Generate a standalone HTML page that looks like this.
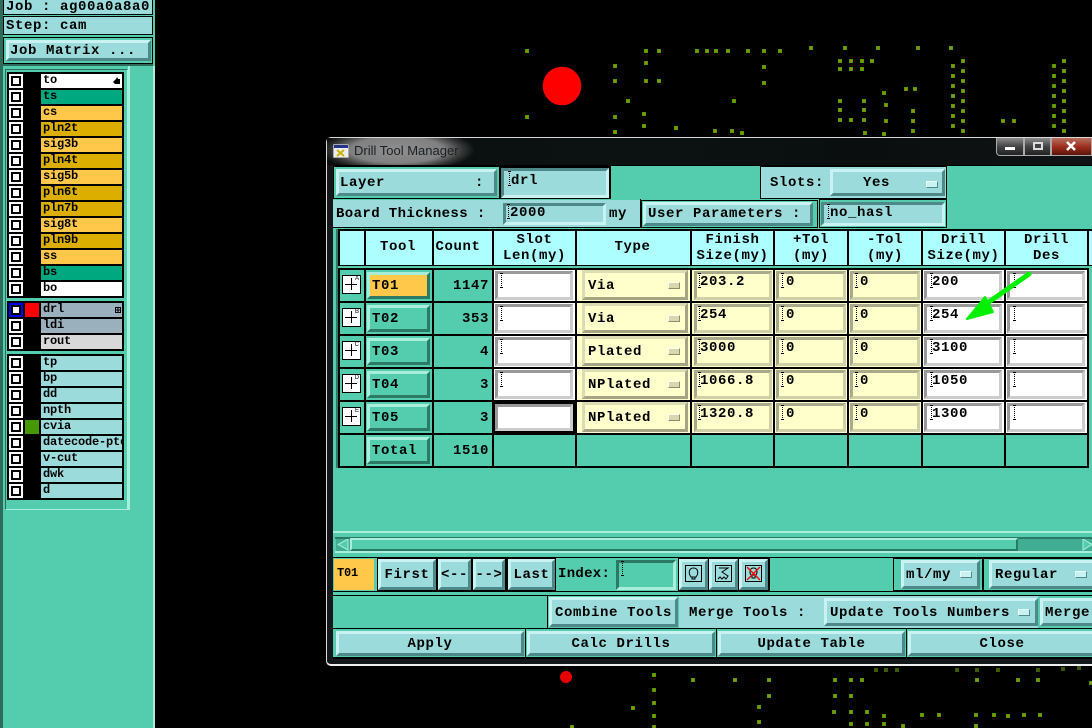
<!DOCTYPE html>
<html><head><meta charset="utf-8"><style>
html,body{margin:0;padding:0;background:#000;width:1092px;height:728px;overflow:hidden}
div{position:absolute;box-sizing:border-box;white-space:pre;overflow:hidden}
body{font:bold 14px/16px "Liberation Mono",monospace;letter-spacing:.6px;color:#000}
.cy{background:#9bdbdb}
.gr{background:#54cdae}
.k{background:#000}
.b{background:#9bdbdb;border:3px solid;border-color:#c9f3f3 #4f8888 #4f8888 #c9f3f3;display:flex;align-items:center;justify-content:center}
.g{background:#54cdae;border:3px solid;border-color:#a9eeda #2c7a66 #2c7a66 #a9eeda;display:flex;align-items:center;padding-left:2px}
.f{border:3px solid;border-color:#4f8888 #c9f3f3 #c9f3f3 #4f8888}
.w{background:#fff;border:3px solid;border-color:#999 #ccc #ccc #999;padding-top:1px}
.y{background:#ffffcc;border:3px solid;border-color:#a9a98c #cfcfa8 #cfcfa8 #a9a98c;padding-top:1px}
.t{background:#ffffcc;border:3px solid;border-color:#dcdcb4 #a5a585 #a5a585 #dcdcb4;display:flex;align-items:center;padding:2px 0 0 3px}
.h{background:#adffff;text-align:center;line-height:15.5px;padding-top:2px}
.n{text-align:right;padding-top:1px}
.c{width:3px;height:15px;background:repeating-linear-gradient(#000 0 1px,transparent 1px 2px) 1px 0/1px 100% no-repeat,linear-gradient(#000,#000) 0 0/3px 1px no-repeat,linear-gradient(#000,#000) 0 100%/3px 1px no-repeat}
.l{background:#000}
.a1{width:12px;height:7px;background:#c9f3f3;border:1px solid;border-color:#e6ffff #4f8888 #4f8888 #e6ffff}
.a2{width:12px;height:7px;background:#d8d8b0;border:1px solid;border-color:#fffff0 #8c8c70 #8c8c70 #fffff0}
.cb{left:9px;width:14px;height:14px;background:#fff}
.cb::after{content:"";position:absolute;left:2px;top:2px;width:10px;height:10px;border:2px solid #000;box-sizing:border-box;background:#fff}
.lb{left:41px;width:81px;height:14px;font-size:12px;line-height:13px;letter-spacing:-.2px;padding-left:2px}
.p{left:342px;width:19px;height:19px;background:#fff;border:1px solid #000;font:6px/6px "Liberation Sans",sans-serif;letter-spacing:0;text-align:right;padding-right:1px;overflow:visible}
.p::before{content:"";position:absolute;left:2px;top:8px;width:12px;height:1px;background:#000}
.p::after{content:"";position:absolute;left:8px;top:2px;width:1px;height:12px;background:#000}
</style></head><body>

<svg style="position:absolute;left:0;top:0" width="1092" height="728">
<circle cx="562" cy="86" r="19.3" fill="#ff0000"/>
<circle cx="566" cy="677" r="6" fill="#e60000"/>
<path fill="#a08c00" stroke="#4f9a00" stroke-width="1" d="M525.5 49.5h3v3h-3zM644.5 49.5h3v3h-3zM657.5 49.5h3v3h-3zM695.5 49.5h3v3h-3zM705.5 49.5h3v3h-3zM714.5 49.5h3v3h-3zM726.5 49.5h3v3h-3zM746.5 49.5h3v3h-3zM762.5 49.5h3v3h-3zM778.5 49.5h3v3h-3z
M809.5 46.5h3v3h-3zM843.5 46.5h3v3h-3zM876.5 46.5h3v3h-3zM916.5 46.5h3v3h-3zM949.5 46.5h3v3h-3z
M838.5 59.5h3v3h-3zM849.5 59.5h3v3h-3zM860.5 59.5h3v3h-3zM870.5 59.5h3v3h-3zM961.5 59.5h3v3h-3zM1062.5 59.5h3v3h-3zM644.5 61.5h3v3h-3z
M613.5 64.5h3v3h-3zM951.5 64.5h3v3h-3zM1052.5 64.5h3v3h-3zM762.5 65.5h3v3h-3z
M838.5 67.5h3v3h-3zM849.5 67.5h3v3h-3zM860.5 67.5h3v3h-3zM961.5 69.5h3v3h-3zM1062.5 69.5h3v3h-3zM951.5 74.5h3v3h-3zM1052.5 74.5h3v3h-3z
M613.5 79.5h3v3h-3zM644.5 79.5h3v3h-3zM657.5 79.5h3v3h-3zM961.5 79.5h3v3h-3zM1062.5 79.5h3v3h-3zM762.5 81.5h3v3h-3zM951.5 84.5h3v3h-3zM1052.5 84.5h3v3h-3z
M904.5 87.5h3v3h-3zM913.5 87.5h3v3h-3zM961.5 89.5h3v3h-3zM1062.5 89.5h3v3h-3zM882.5 91.5h3v3h-3zM951.5 94.5h3v3h-3zM1052.5 94.5h3v3h-3z
M838.5 99.5h3v3h-3zM862.5 99.5h3v3h-3zM961.5 99.5h3v3h-3zM1062.5 99.5h3v3h-3zM626.5 99.5h3v3h-3zM732.5 99.5h3v3h-3zM884.5 103.5h3v3h-3zM951.5 104.5h3v3h-3zM1052.5 104.5h3v3h-3z
M838.5 108.5h3v3h-3zM862.5 108.5h3v3h-3zM911.5 109.5h3v3h-3zM961.5 109.5h3v3h-3zM1062.5 109.5h3v3h-3zM642.5 112.5h3v3h-3zM951.5 114.5h3v3h-3zM1052.5 114.5h3v3h-3zM525.5 115.5h3v3h-3zM613.5 115.5h3v3h-3z
M838.5 118.5h3v3h-3zM849.5 118.5h3v3h-3zM862.5 118.5h3v3h-3zM884.5 119.5h3v3h-3zM911.5 119.5h3v3h-3zM961.5 119.5h3v3h-3zM1062.5 119.5h3v3h-3zM1001.5 119.5h3v3h-3zM1012.5 119.5h3v3h-3z
M642.5 124.5h3v3h-3zM951.5 124.5h3v3h-3zM1052.5 124.5h3v3h-3zM674.5 126.5h3v3h-3zM713.5 129.5h3v3h-3zM730.5 129.5h3v3h-3zM911.5 129.5h3v3h-3zM961.5 129.5h3v3h-3zM1062.5 129.5h3v3h-3zM613.5 130.5h3v3h-3zM740.5 131.5h3v3h-3zM863.5 131.5h3v3h-3zM882.5 132.5h3v3h-3z
M652.5 673.5h3v3h-3zM691.5 678.5h3v3h-3zM733.5 678.5h3v3h-3zM767.5 678.5h3v3h-3zM833.5 678.5h3v3h-3zM849.5 678.5h3v3h-3zM860.5 678.5h3v3h-3zM975.5 678.5h3v3h-3zM1016.5 678.5h3v3h-3zM1036.5 678.5h3v3h-3zM1089.5 681.5h3v3h-3z
M652.5 688.5h3v3h-3zM767.5 694.5h3v3h-3zM833.5 694.5h3v3h-3zM849.5 694.5h3v3h-3zM652.5 701.5h3v3h-3zM757.5 705.5h3v3h-3zM631.5 706.5h3v3h-3z
M832.5 710.5h3v3h-3zM849.5 710.5h3v3h-3zM865.5 710.5h3v3h-3zM920.5 713.5h3v3h-3zM937.5 713.5h3v3h-3zM974.5 713.5h3v3h-3zM992.5 713.5h3v3h-3zM1022.5 713.5h3v3h-3zM1038.5 713.5h3v3h-3zM652.5 714.5h3v3h-3zM882.5 714.5h3v3h-3zM1006.5 714.5h3v3h-3z
M757.5 720.5h3v3h-3zM849.5 722.5h3v3h-3zM865.5 722.5h3v3h-3zM882.5 722.5h3v3h-3zM901.5 724.5h3v3h-3zM974.5 724.5h3v3h-3zM570.5 725.5h3v3h-3zM652.5 725.5h3v3h-3z"/>
<path fill="#5a5000" stroke="#2f5c00" stroke-width="1" d="M874.5 668.5h3v3h-3zM884.5 668.5h3v3h-3zM895.5 668.5h3v3h-3zM955.5 668.5h3v3h-3zM975.5 668.5h3v3h-3zM996.5 668.5h3v3h-3zM1036.5 668.5h3v3h-3zM1061.5 667.5h3v3h-3zM1077.5 666.5h3v3h-3z"/>
</svg>

<!-- LEFT PANEL -->
<div class="gr" style="left:0;top:0;width:155px;height:728px"></div>
<div style="left:0;top:0;width:3px;height:728px;background:#2d6b5a"></div>
<div style="left:153px;top:66px;width:2px;height:662px;background:#a9eeda"></div>
<div style="left:128px;top:66px;width:2px;height:444px;background:#a9eeda"></div>
<div style="left:3px;top:64px;width:150px;height:2px;background:#2d6b5a"></div>
<div class="cy" style="left:3px;top:-3px;width:150px;height:18px;border:1px solid #000;padding:1px 2px;line-height:16px">Job : ag00a0a8a0</div>
<div class="cy" style="left:3px;top:16px;width:150px;height:19px;border:1px solid #000;padding:1px 2px;line-height:16px">Step: cam</div>
<div style="left:3px;top:37px;width:150px;height:27px;background:#54cdae;border:1px solid #000"></div>
<div class="b" style="left:6px;top:40px;width:145px;height:21px;justify-content:flex-start;padding-left:1px">Job Matrix ...</div>

<div style="left:5px;top:69px;width:123px;height:441px;border:1px solid #2d6b5a;border-right-color:#a9eeda;border-bottom-color:#a9eeda"></div>

<div class="k" style="left:7px;top:72px;width:117px;height:226px"></div>
<div class="k" style="left:7px;top:301px;width:117px;height:50px"></div>
<div class="k" style="left:7px;top:354px;width:117px;height:146px"></div>

<div class="cb" style="top:74px"></div><div class="lb" style="top:74px;background:#fff">to</div>
<div class="cb" style="top:90px"></div><div class="lb" style="top:90px;background:#00a880">ts</div>
<div class="cb" style="top:106px"></div><div class="lb" style="top:106px;background:#ffc84a">cs</div>
<div class="cb" style="top:122px"></div><div class="lb" style="top:122px;background:#dcae00">pln2t</div>
<div class="cb" style="top:138px"></div><div class="lb" style="top:138px;background:#ffc84a">sig3b</div>
<div class="cb" style="top:154px"></div><div class="lb" style="top:154px;background:#dcae00">pln4t</div>
<div class="cb" style="top:170px"></div><div class="lb" style="top:170px;background:#ffc84a">sig5b</div>
<div class="cb" style="top:186px"></div><div class="lb" style="top:186px;background:#dcae00">pln6t</div>
<div class="cb" style="top:202px"></div><div class="lb" style="top:202px;background:#dcae00">pln7b</div>
<div class="cb" style="top:218px"></div><div class="lb" style="top:218px;background:#ffc84a">sig8t</div>
<div class="cb" style="top:234px"></div><div class="lb" style="top:234px;background:#dcae00">pln9b</div>
<div class="cb" style="top:250px"></div><div class="lb" style="top:250px;background:#ffc84a">ss</div>
<div class="cb" style="top:266px"></div><div class="lb" style="top:266px;background:#00a880">bs</div>
<div class="cb" style="top:282px"></div><div class="lb" style="top:282px;background:#fff">bo</div>

<div class="cb" style="top:303px;background:#0000f0"></div><div style="left:25px;top:303px;width:14px;height:14px;background:#ff0000"></div><div class="lb" style="top:303px;background:#9ab0bc">drl</div>
<div class="cb" style="top:319px"></div><div class="lb" style="top:319px;background:#9ab0bc">ldi</div>
<div class="cb" style="top:335px"></div><div class="lb" style="top:335px;background:#d8d8d8">rout</div>

<div class="cb" style="top:356px"></div><div class="lb" style="top:356px;background:#9bdbdb">tp</div>
<div class="cb" style="top:372px"></div><div class="lb" style="top:372px;background:#9bdbdb">bp</div>
<div class="cb" style="top:388px"></div><div class="lb" style="top:388px;background:#9bdbdb">dd</div>
<div class="cb" style="top:404px"></div><div class="lb" style="top:404px;background:#9bdbdb">npth</div>
<div class="cb" style="top:420px"></div><div style="left:25px;top:420px;width:14px;height:14px;background:#449900"></div><div class="lb" style="top:420px;background:#9bdbdb">cvia</div>
<div class="cb" style="top:436px"></div><div class="lb" style="top:436px;background:#9bdbdb">datecode-ptc</div>
<div class="cb" style="top:452px"></div><div class="lb" style="top:452px;background:#9bdbdb">v-cut</div>
<div class="cb" style="top:468px"></div><div class="lb" style="top:468px;background:#9bdbdb">dwk</div>
<div class="cb" style="top:484px"></div><div class="lb" style="top:484px;background:#9bdbdb">d</div>

<svg style="position:absolute;left:112px;top:76px" width="9" height="10"><path d="M1 6l3-3 1-2 1 2h2v5H3z" fill="#000"/></svg>
<svg style="position:absolute;left:115px;top:307px" width="7" height="7"><path d="M.5.5h5v5h-5zM3 .5v5M.5 3h5" fill="none" stroke="#000"/></svg>

<!-- WINDOW -->
<div style="left:326px;top:137px;width:766px;height:529px;background:#15181a;border:1px solid #d8d8d8;border-right:0;border-bottom:2px solid #eee;border-radius:5px 0 0 5px"></div>
<div style="left:327px;top:138px;width:765px;height:27px;background:linear-gradient(90deg,#0a0d0d,#0c1212 40%,#0a0e0e 70%,#101416)"></div>
<div style="left:327px;top:138px;width:150px;height:27px;background:radial-gradient(ellipse 78px 22px at 70px 12px,#8f8f8f 0,#808080 60%,rgba(90,90,90,.6) 82%,rgba(0,0,0,0) 100%)"></div>
<div style="left:354px;top:143px;width:120px;height:16px;font:13px/16px 'Liberation Sans',sans-serif;letter-spacing:0;color:#1a2024">Drill Tool Manager</div>
<svg style="position:absolute;left:333px;top:144px" width="16" height="14"><rect width="16" height="14" fill="#eee" stroke="#666"/><rect x="1" y="1" width="14" height="3" fill="#223388"/><path d="M4 6l7 6M11 6l-7 6" stroke="#c8b400" stroke-width="2"/></svg>

<div style="left:996px;top:138px;width:28px;height:18px;background:linear-gradient(#8c8c8c,#444 50%,#222);border:1px solid #aaa;border-top:0;border-radius:0 0 0 4px"></div>
<div style="left:1005px;top:147px;width:10px;height:3px;background:#fff"></div>
<div style="left:1024px;top:138px;width:27px;height:18px;background:linear-gradient(#8c8c8c,#444 50%,#222);border:1px solid #aaa;border-top:0"></div>
<div style="left:1033px;top:142px;width:10px;height:8px;border:2px solid #ddd;background:#444"></div>
<div style="left:1051px;top:138px;width:41px;height:18px;background:linear-gradient(#b87060,#a03020 50%,#5a1408);border:1px solid #aaa;border-top:0"></div>
<svg style="position:absolute;left:1064px;top:140px" width="14" height="13"><path d="M3 2l8 8M11 2l-8 8" stroke="#fff" stroke-width="2.6"/></svg>

<div class="gr" style="left:333px;top:165px;width:759px;height:494px;border-top:1px solid #000"></div>

<!-- top rows -->
<div class="k" style="left:333px;top:166px;width:167px;height:33px"></div>
<div class="gr" style="left:334px;top:167px;width:165px;height:31px"></div>
<div class="b" style="left:336px;top:169px;width:161px;height:27px;justify-content:flex-start;padding-left:1px">Layer          :</div>
<div class="k" style="left:500px;top:166px;width:111px;height:33px"></div>
<div class="cy f" style="left:501px;top:168px;width:108px;height:30px;padding:3px 0 0 7px;line-height:15px">drl</div>
<div class="c" style="left:508px;top:171px"></div>
<div class="k" style="left:760px;top:166px;width:187px;height:33px"></div>
<div class="cy" style="left:761px;top:167px;width:185px;height:31px;padding:8px 0 0 9px">Slots:</div>
<div class="b" style="left:830px;top:169px;width:115px;height:27px;padding-right:22px">Yes</div>
<div class="a1" style="left:926px;top:181px"></div>

<div class="cy" style="left:333px;top:200px;width:307px;height:28px;border-bottom:1px solid #000;padding:6px 0 0 3px;letter-spacing:.4px">Board Thickness :</div>
<div class="f" style="left:503px;top:203px;width:103px;height:22px;padding:1px 0 0 4px;line-height:13px">2000</div>
<div class="c" style="left:507px;top:204px"></div>
<div style="left:609px;top:206px;width:30px;height:18px">my</div>
<div class="k" style="left:640px;top:199px;width:1px;height:29px"></div>
<div class="gr" style="left:641px;top:200px;width:177px;height:28px;border:1px solid #000"></div>
<div class="b" style="left:643px;top:202px;width:170px;height:24px;justify-content:flex-start;padding-left:2px">User Parameters :</div>
<div class="gr" style="left:819px;top:199px;width:128px;height:29px;border:1px solid #000"></div>
<div class="cy f" style="left:821px;top:202px;width:124px;height:24px;padding:2px 0 0 6px;line-height:13px">no_hasl</div>
<div class="c" style="left:827px;top:204px"></div>

<!-- table header -->
<div style="left:333px;top:229px;width:3px;height:239px;background:#54cdae"></div>
<div style="left:336px;top:229px;width:2px;height:239px;background:#2c7a66"></div>
<div class="k" style="left:338px;top:229px;width:754px;height:37px"></div>
<div class="h" style="left:340px;top:231px;width:24px;height:34px"></div>
<div class="h" style="left:366px;top:231px;width:66px;height:34px;padding:9px 2px 0 0">Tool</div>
<div class="h" style="left:434px;top:231px;width:58px;height:34px;padding:9px 10px 0 0">Count</div>
<div class="h" style="left:494px;top:231px;width:81px;height:34px">Slot
Len(my)</div>
<div class="h" style="left:577px;top:231px;width:113px;height:34px;padding:9px 2px 0 0">Type</div>
<div class="h" style="left:692px;top:231px;width:81px;height:34px">Finish
Size(my)</div>
<div class="h" style="left:775px;top:231px;width:72px;height:34px">+Tol
(my)</div>
<div class="h" style="left:849px;top:231px;width:72px;height:34px">-Tol
(my)</div>
<div class="h" style="left:923px;top:231px;width:81px;height:34px">Drill
Size(my)</div>
<div class="h" style="left:1006px;top:231px;width:81px;height:34px">Drill
Des</div>
<div class="h" style="left:1089px;top:231px;width:3px;height:34px"></div>

<!-- cell fills -->
<div style="left:494px;top:270px;width:81px;height:163px;background:#fff"></div>
<div class="k" style="left:494px;top:402px;width:81px;height:31px"></div>
<div style="left:577px;top:270px;width:113px;height:163px;background:#ffffcc"></div>
<div style="left:692px;top:270px;width:229px;height:163px;background:#ffffcc"></div>
<div style="left:923px;top:270px;width:164px;height:163px;background:#fff"></div>

<!-- grid -->
<div class="l" style="left:338px;top:268px;width:751px;height:2px"></div>
<div class="l" style="left:338px;top:301px;width:751px;height:2px"></div>
<div class="l" style="left:338px;top:334px;width:751px;height:2px"></div>
<div class="l" style="left:338px;top:367px;width:751px;height:2px"></div>
<div class="l" style="left:338px;top:400px;width:751px;height:2px"></div>
<div class="l" style="left:338px;top:433px;width:751px;height:2px"></div>
<div class="l" style="left:338px;top:466px;width:751px;height:2px"></div>
<div class="l" style="left:338px;top:268px;width:2px;height:200px"></div>
<div class="l" style="left:364px;top:268px;width:2px;height:200px"></div>
<div class="l" style="left:432px;top:268px;width:2px;height:200px"></div>
<div class="l" style="left:492px;top:268px;width:2px;height:200px"></div>
<div class="l" style="left:575px;top:268px;width:2px;height:200px"></div>
<div class="l" style="left:690px;top:268px;width:2px;height:200px"></div>
<div class="l" style="left:773px;top:268px;width:2px;height:200px"></div>
<div class="l" style="left:847px;top:268px;width:2px;height:200px"></div>
<div class="l" style="left:921px;top:268px;width:2px;height:200px"></div>
<div class="l" style="left:1004px;top:268px;width:2px;height:200px"></div>
<div class="l" style="left:1087px;top:268px;width:2px;height:200px"></div>

<!-- Row 1 -->
<div class="p" style="top:275px">A</div>
<div class="g" style="left:367px;top:272px;width:63px;height:27px;background:#ffc84a">T01</div>
<div class="n" style="left:434px;top:277px;width:55px;height:18px">1147</div>
<div class="w" style="left:495px;top:271px;width:78px;height:29px"></div><div class="c" style="left:500px;top:273px"></div>
<div class="t" style="left:582px;top:270px;width:106px;height:30px">Via</div><div class="a2" style="left:668px;top:282px"></div>
<div class="y" style="left:694px;top:271px;width:78px;height:29px;padding-left:3px;line-height:14px">203.2</div><div class="c" style="left:698px;top:273px"></div>
<div class="y" style="left:776px;top:271px;width:70px;height:29px;padding-left:7px;line-height:14px">0</div><div class="c" style="left:781px;top:273px"></div>
<div class="y" style="left:850px;top:271px;width:70px;height:29px;padding-left:7px;line-height:14px">0</div><div class="c" style="left:855px;top:273px"></div>
<div class="w" style="left:924px;top:271px;width:78px;height:29px;padding-left:5px;line-height:14px">200</div><div class="c" style="left:930px;top:273px"></div>
<div class="w" style="left:1007px;top:271px;width:78px;height:29px"></div><div class="c" style="left:1013px;top:273px"></div>

<!-- Row 2 -->
<div class="p" style="top:308px">B</div>
<div class="g" style="left:367px;top:305px;width:63px;height:27px">T02</div>
<div class="n" style="left:434px;top:310px;width:55px;height:18px">353</div>
<div class="w" style="left:495px;top:304px;width:78px;height:29px"></div><div class="c" style="left:500px;top:306px"></div>
<div class="t" style="left:582px;top:303px;width:106px;height:30px">Via</div><div class="a2" style="left:668px;top:315px"></div>
<div class="y" style="left:694px;top:304px;width:78px;height:29px;padding-left:3px;line-height:14px">254</div><div class="c" style="left:698px;top:306px"></div>
<div class="y" style="left:776px;top:304px;width:70px;height:29px;padding-left:7px;line-height:14px">0</div><div class="c" style="left:781px;top:306px"></div>
<div class="y" style="left:850px;top:304px;width:70px;height:29px;padding-left:7px;line-height:14px">0</div><div class="c" style="left:855px;top:306px"></div>
<div class="w" style="left:924px;top:304px;width:78px;height:29px;padding-left:5px;line-height:14px">254</div><div class="c" style="left:930px;top:306px"></div>
<div class="w" style="left:1007px;top:304px;width:78px;height:29px"></div><div class="c" style="left:1013px;top:306px"></div>

<!-- Row 3 -->
<div class="p" style="top:341px">C</div>
<div class="g" style="left:367px;top:338px;width:63px;height:27px">T03</div>
<div class="n" style="left:434px;top:343px;width:55px;height:18px">4</div>
<div class="w" style="left:495px;top:337px;width:78px;height:29px"></div><div class="c" style="left:500px;top:339px"></div>
<div class="t" style="left:582px;top:336px;width:106px;height:30px">Plated</div><div class="a2" style="left:668px;top:348px"></div>
<div class="y" style="left:694px;top:337px;width:78px;height:29px;padding-left:3px;line-height:14px">3000</div><div class="c" style="left:698px;top:339px"></div>
<div class="y" style="left:776px;top:337px;width:70px;height:29px;padding-left:7px;line-height:14px">0</div><div class="c" style="left:781px;top:339px"></div>
<div class="y" style="left:850px;top:337px;width:70px;height:29px;padding-left:7px;line-height:14px">0</div><div class="c" style="left:855px;top:339px"></div>
<div class="w" style="left:924px;top:337px;width:78px;height:29px;padding-left:5px;line-height:14px">3100</div><div class="c" style="left:930px;top:339px"></div>
<div class="w" style="left:1007px;top:337px;width:78px;height:29px"></div><div class="c" style="left:1013px;top:339px"></div>

<!-- Row 4 -->
<div class="p" style="top:374px">D</div>
<div class="g" style="left:367px;top:371px;width:63px;height:27px">T04</div>
<div class="n" style="left:434px;top:376px;width:55px;height:18px">3</div>
<div class="w" style="left:495px;top:370px;width:78px;height:29px"></div><div class="c" style="left:500px;top:372px"></div>
<div class="t" style="left:582px;top:369px;width:106px;height:30px">NPlated</div><div class="a2" style="left:668px;top:381px"></div>
<div class="y" style="left:694px;top:370px;width:78px;height:29px;padding-left:3px;line-height:14px">1066.8</div><div class="c" style="left:698px;top:372px"></div>
<div class="y" style="left:776px;top:370px;width:70px;height:29px;padding-left:7px;line-height:14px">0</div><div class="c" style="left:781px;top:372px"></div>
<div class="y" style="left:850px;top:370px;width:70px;height:29px;padding-left:7px;line-height:14px">0</div><div class="c" style="left:855px;top:372px"></div>
<div class="w" style="left:924px;top:370px;width:78px;height:29px;padding-left:5px;line-height:14px">1050</div><div class="c" style="left:930px;top:372px"></div>
<div class="w" style="left:1007px;top:370px;width:78px;height:29px"></div><div class="c" style="left:1013px;top:372px"></div>

<!-- Row 5 -->
<div class="p" style="top:407px">E</div>
<div class="g" style="left:367px;top:404px;width:63px;height:27px">T05</div>
<div class="n" style="left:434px;top:409px;width:55px;height:18px">3</div>
<div class="w" style="left:495px;top:404px;width:78px;height:27px"></div>
<div class="t" style="left:582px;top:402px;width:106px;height:30px">NPlated</div><div class="a2" style="left:668px;top:414px"></div>
<div class="y" style="left:694px;top:403px;width:78px;height:29px;padding-left:3px;line-height:14px">1320.8</div><div class="c" style="left:698px;top:405px"></div>
<div class="y" style="left:776px;top:403px;width:70px;height:29px;padding-left:7px;line-height:14px">0</div><div class="c" style="left:781px;top:405px"></div>
<div class="y" style="left:850px;top:403px;width:70px;height:29px;padding-left:7px;line-height:14px">0</div><div class="c" style="left:855px;top:405px"></div>
<div class="w" style="left:924px;top:403px;width:78px;height:29px;padding-left:5px;line-height:14px">1300</div><div class="c" style="left:930px;top:405px"></div>
<div class="w" style="left:1007px;top:403px;width:78px;height:29px"></div><div class="c" style="left:1013px;top:405px"></div>

<!-- Total -->
<div class="g" style="left:367px;top:437px;width:63px;height:27px">Total</div>
<div class="n" style="left:434px;top:442px;width:55px;height:18px">1510</div>

<!-- scrollbar -->
<div style="left:333px;top:531px;width:759px;height:2px;background:#a9eeda"></div>
<div style="left:335px;top:537px;width:757px;height:2px;background:#2c7a66"></div>
<div style="left:335px;top:551px;width:757px;height:2px;background:#a9eeda"></div>
<div style="left:336px;top:539px;width:756px;height:12px;background:#41ae94"></div>
<div class="g" style="left:350px;top:538px;width:668px;height:13px;border-width:2px"></div>
<svg style="position:absolute;left:337px;top:539px" width="12" height="12"><path d="M11 0v11L1 5.500z" fill="#54cdae" stroke="#a9eeda"/></svg>
<svg style="position:absolute;left:1082px;top:539px" width="10" height="12"><path d="M1 0v11L10 5.500z" fill="#54cdae" stroke="#a9eeda"/></svg>

<!-- index row -->
<div class="k" style="left:333px;top:557px;width:759px;height:1px"></div>
<div class="k" style="left:333px;top:591px;width:759px;height:1px"></div>
<div style="left:334px;top:559px;width:40px;height:31px;background:#ffc84a;font-size:12px;letter-spacing:-.2px;padding:6px 0 0 3px">T01</div>
<div class="k" style="left:377px;top:558px;width:179px;height:33px"></div>
<div class="b" style="left:378px;top:559px;width:58px;height:31px">First</div>
<div class="b" style="left:438px;top:559px;width:33px;height:31px">&lt;--</div>
<div class="b" style="left:473px;top:559px;width:32px;height:31px">--&gt;</div>
<div class="b" style="left:508px;top:559px;width:47px;height:31px">Last</div>
<div style="left:558px;top:566px;width:58px;height:18px;letter-spacing:.3px">Index:</div>
<div class="gr f" style="left:616px;top:560px;width:60px;height:30px;border-color:#2c7a66 #a9eeda #a9eeda #2c7a66"></div>
<div class="c" style="left:621px;top:561px"></div>
<div class="k" style="left:678px;top:558px;width:92px;height:33px"></div>
<div class="b" style="left:679px;top:559px;width:29px;height:31px"></div>
<div class="b" style="left:709px;top:559px;width:29px;height:31px"></div>
<div class="b" style="left:739px;top:559px;width:29px;height:31px"></div>
<svg style="position:absolute;left:685px;top:565px" width="18" height="18"><rect x=".5" y=".5" width="16" height="16" fill="none" stroke="#000"/><path d="M6 12C3 8 4 3 8.500 3S14 8 11 12zM7 12v2h3v-2" fill="none" stroke="#000"/></svg>
<svg style="position:absolute;left:715px;top:565px" width="18" height="18"><rect x=".5" y=".5" width="16" height="16" fill="none" stroke="#000"/><path d="M4 3h9L7 7l6 4-2 3-2-2-2 2-2-2-2 2" fill="none" stroke="#000"/></svg>
<svg style="position:absolute;left:745px;top:565px" width="18" height="18"><rect x=".5" y=".5" width="16" height="16" fill="none" stroke="#000"/><path d="M6 10C4 7 5 3 8.500 3S13 7 11 10zM7 10v3h3v-3" fill="none" stroke="#000"/><path d="M2 2l13 13M15 2L2 15" stroke="#f00" stroke-width="1.400"/></svg>

<div class="k" style="left:769px;top:558px;width:1px;height:33px"></div>
<div class="k" style="left:893px;top:558px;width:199px;height:33px"></div>
<div class="gr" style="left:894px;top:559px;width:88px;height:31px"></div>
<div class="gr" style="left:984px;top:559px;width:108px;height:31px"></div>
<div class="b" style="left:901px;top:560px;width:79px;height:29px;justify-content:flex-start;padding-left:2px">ml/my</div><div class="a1" style="left:960px;top:571px"></div>
<div class="b" style="left:989px;top:560px;width:110px;height:29px;justify-content:flex-start;padding-left:3px">Regular</div><div class="a1" style="left:1075px;top:571px"></div>

<!-- merge row -->
<div class="k" style="left:333px;top:595px;width:759px;height:1px"></div>
<div class="k" style="left:333px;top:628px;width:759px;height:1px"></div>
<div class="k" style="left:547px;top:595px;width:1px;height:34px"></div>
<div class="b" style="left:549px;top:597px;width:129px;height:30px;padding-top:1px">Combine Tools</div>
<div class="cy" style="left:679px;top:596px;width:413px;height:32px;padding:9px 0 0 10px">Merge Tools :</div>
<div class="b" style="left:824px;top:598px;width:214px;height:28px;justify-content:flex-start;padding:1px 0 0 3px;background:#9bdbdb">Update Tools Numbers</div><div class="a1" style="left:1018px;top:609px"></div>
<div class="gr" style="left:1038px;top:596px;width:54px;height:32px"></div>
<div class="b" style="left:1040px;top:598px;width:62px;height:28px;justify-content:flex-start;padding:1px 0 0 2px">Merge</div>

<!-- bottom buttons -->
<div class="k" style="left:333px;top:657px;width:759px;height:2px"></div>
<div class="k" style="left:525px;top:629px;width:1px;height:28px"></div>
<div class="k" style="left:716px;top:629px;width:1px;height:28px"></div>
<div class="k" style="left:906px;top:629px;width:1px;height:28px"></div>
<div class="b" style="left:336px;top:631px;width:188px;height:25px">Apply</div>
<div class="b" style="left:527px;top:631px;width:188px;height:25px">Calc Drills</div>
<div class="b" style="left:718px;top:631px;width:187px;height:25px">Update Table</div>
<div class="b" style="left:908px;top:631px;width:188px;height:25px">Close</div>

<!-- green arrow -->
<svg style="position:absolute;left:960px;top:268px" width="80" height="60"><path d="M69 6L26 36" stroke="#00f000" stroke-width="5" stroke-linecap="round"/><path d="M7 51L25 29 33 44z" fill="#00f000" stroke="#00f000" stroke-width="2" stroke-linejoin="round"/></svg>

</body></html>
